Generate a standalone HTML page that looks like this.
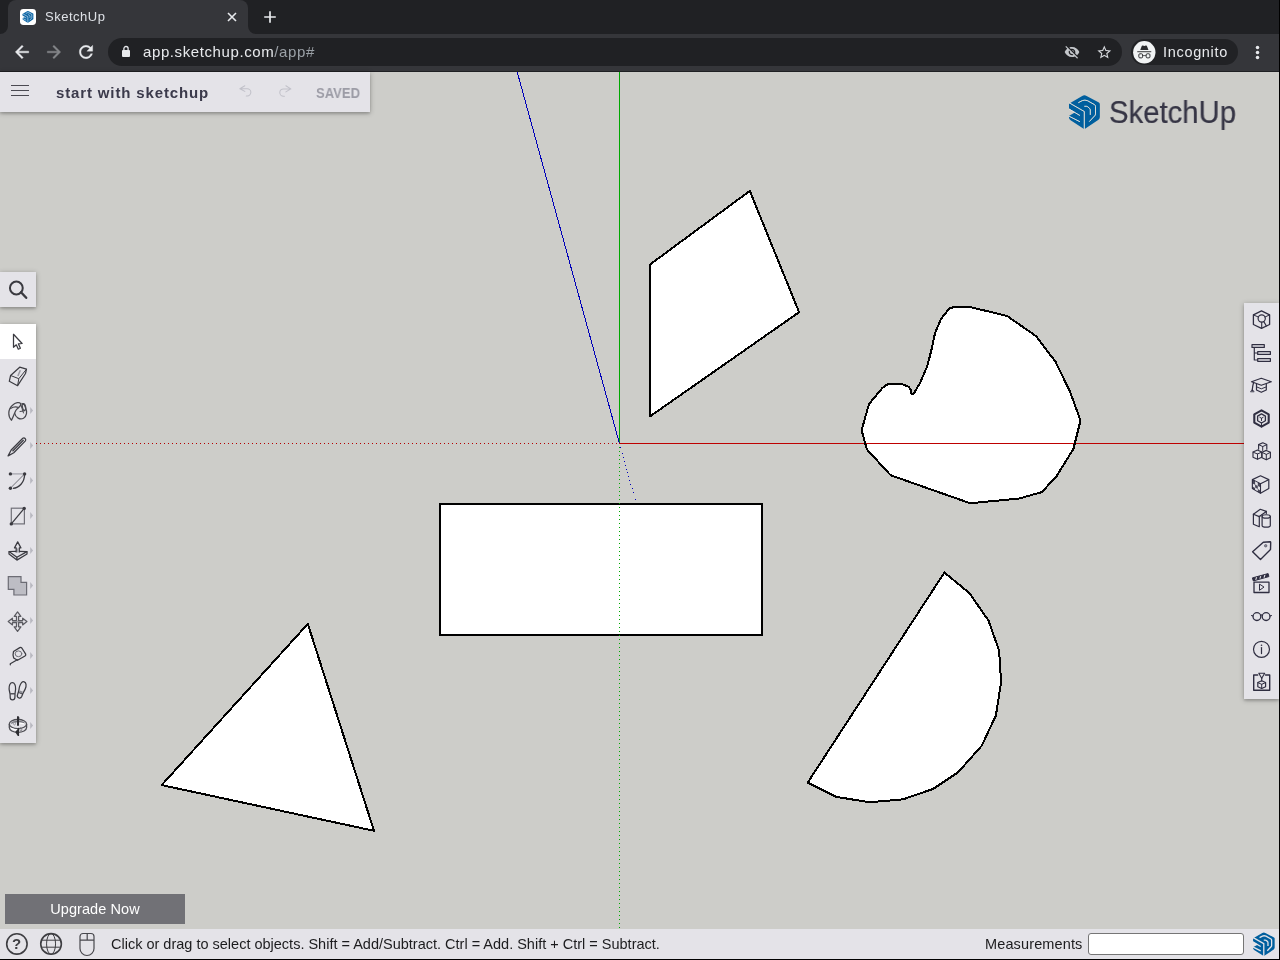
<!DOCTYPE html>
<html>
<head>
<meta charset="utf-8">
<title>SketchUp</title>
<style>
html,body{margin:0;padding:0;}
body{width:1280px;height:960px;overflow:hidden;position:relative;background:#cdcdc9;font-family:"Liberation Sans",sans-serif;}
.abs{position:absolute;}
#tabbar{left:0;top:0;width:1280px;height:34px;background:#202124;}
#tab{left:8px;top:0;width:240px;height:34px;background:#35363a;border-radius:8px 8px 0 0;}
#toolbar{left:0;top:34px;width:1280px;height:37px;background:#35363a;}
#tbline{left:0;top:71px;width:1280px;height:1px;background:#1f2023;}
#omni{left:108px;top:38px;width:1014px;height:28px;border-radius:14px;background:#202124;}
#hdr{left:0;top:72px;width:370px;height:40px;background:#e4e3e8;box-shadow:0 1px 5px rgba(0,0,0,.3),0 2px 2px rgba(0,0,0,.1);}
#ltool1{left:0;top:272px;width:36px;height:35px;background:#e4e3e8;box-shadow:0 1px 5px rgba(0,0,0,.3),0 2px 2px rgba(0,0,0,.1);}
#ltool2{left:0;top:324px;width:36px;height:419px;background:#e4e3e8;box-shadow:0 1px 5px rgba(0,0,0,.3),0 2px 2px rgba(0,0,0,.1);}
#rtool{left:1244px;top:303px;width:35px;height:396px;background:#e4e3e8;box-shadow:0 1px 5px rgba(0,0,0,.3),0 2px 2px rgba(0,0,0,.1);}
#status{left:0;top:929px;width:1280px;height:30px;background:#e4e3e8;}
#botline{left:0;top:959px;width:1280px;height:1px;background:#000;}
#upg{left:5px;top:894px;width:180px;height:30px;background:#717176;color:#fff;font-size:14.500px;letter-spacing:.07px;line-height:31px;text-align:center;will-change:transform;}

.ic{position:absolute;overflow:visible;}
.tx{position:absolute;white-space:nowrap;line-height:1;will-change:transform;}
#edgeR{left:1279px;top:0;width:1px;height:960px;background:#000;}

</style>
</head>
<body>
<svg width="0" height="0" style="position:absolute;left:0;top:0"><defs>
<mask id="sumask" maskUnits="userSpaceOnUse" x="0" y="0" width="46" height="46">
<rect width="46" height="46" fill="#fff"/>
<g fill="none" stroke="#000" stroke-width="0.85">
<path d="M7.200,12.800L22.300,21.500V40"/>
<path d="M6.500,18.700L17.900,25.500"/>
<path d="M6.500,25.900L17.900,31.700"/>
<path d="M16.300,12.700L20.300,10.600Q22.900,9.600 25.500,10.700L32.600,14.700Q33.500,15.300 33.500,16.400V23.900Q33.500,25 32.700,25.800L27.300,31.600"/>
<path d="M22.300,16.300H24.400Q25.200,16.300 25.900,16.900L27.600,18.400Q28.300,19.100 28.300,20V24.900"/>
</g>
<polygon points="6,18.200 13.200,22.300 6,26.400" fill="#000"/>
</mask>
<mask id="sumask2" maskUnits="userSpaceOnUse" x="0" y="0" width="46" height="46">
<rect width="46" height="46" fill="#fff"/>
<g fill="none" stroke="#000" stroke-width="1.85">
<path d="M7.200,12.800L22.300,21.500V40"/>
<path d="M6.500,18.700L17.900,25.500"/>
<path d="M6.500,25.900L17.900,31.700"/>
<path d="M16.300,12.700L20.300,10.600Q22.900,9.600 25.500,10.700L32.600,14.700Q33.500,15.300 33.500,16.400V23.900Q33.500,25 32.700,25.800L27.300,31.600"/>
<path d="M22.300,16.300H24.400Q25.200,16.300 25.900,16.900L27.600,18.400Q28.300,19.100 28.300,20V24.900"/>
</g>
<polygon points="6,17.800 14.200,22.600 6,27" fill="#000"/>
</mask>
<mask id="sumask3" maskUnits="userSpaceOnUse" x="0" y="0" width="46" height="46">
<rect width="46" height="46" fill="#fff"/>
<g fill="none" stroke="#000" stroke-width="1.5">
<path d="M7.200,12.800L22.300,21.500V40"/>
<path d="M6.500,18.700L17.900,25.500"/>
<path d="M6.500,25.900L17.900,31.700"/>
<path d="M16.300,12.700L20.300,10.600Q22.900,9.600 25.500,10.700L32.600,14.700Q33.500,15.300 33.500,16.400V23.900Q33.500,25 32.700,25.800L27.300,31.600"/>
<path d="M22.300,16.300H24.400Q25.200,16.300 25.900,16.900L27.600,18.400Q28.300,19.100 28.300,20V24.900"/>
</g>
<polygon points="6,18.200 13.200,22.300 6,26.400" fill="#000"/>
</mask>
<g id="sulogo"><path mask="url(#sumask)" fill="#005f9e" d="M20.200,6.100Q22.400,4.600 24.600,6.100L36.900,12.500Q37.850,13.100 37.850,14.200V27Q37.850,28.700 36.500,29.700L23.100,38.700Q22.400,39.300 21.600,38.700L8.600,30.300Q7,29.300 7,27.500V14.600Q7,13.700 7.800,13.200Z"/></g>
<g id="sulogo2"><path mask="url(#sumask2)" fill="#005f9e" d="M20.200,6.100Q22.400,4.600 24.600,6.100L36.900,12.500Q37.850,13.100 37.850,14.200V27Q37.850,28.700 36.500,29.700L23.100,38.700Q22.400,39.300 21.600,38.700L8.600,30.300Q7,29.300 7,27.500V14.600Q7,13.700 7.800,13.200Z"/></g>
<g id="sulogo3"><path mask="url(#sumask3)" fill="#0a64a4" d="M20.200,6.100Q22.400,4.600 24.600,6.100L36.900,12.500Q37.850,13.100 37.850,14.200V27Q37.850,28.700 36.500,29.700L23.100,38.700Q22.400,39.300 21.600,38.700L8.600,30.300Q7,29.300 7,27.500V14.600Q7,13.700 7.800,13.200Z"/></g>
</defs></svg>
<svg id="scene" class="abs" style="left:0;top:72px" width="1280" height="856" viewBox="0 72 1280 856">
<g shape-rendering="crispEdges" fill="none" stroke-width="1">
<line x1="0" y1="443.5" x2="619" y2="443.5" stroke="#b40000" stroke-dasharray="1 3"/>
<line x1="619" y1="443.5" x2="1280" y2="443.5" stroke="#be0000"/>
<line x1="619.5" y1="72" x2="619.5" y2="443" stroke="#00a800"/>
</g>
<line x1="517.230" y1="72" x2="619.460" y2="443.500" stroke="#0000b8" stroke-width="1" shape-rendering="crispEdges"/>
<path shape-rendering="crispEdges" fill="#0000b8" d="M620,447h1v1h-1zM622,453h1v1h-1zM623,457h1v1h-1zM624,461h1v1h-1zM625,465h1v1h-1zM626,469h1v1h-1zM627,472h1v1h-1zM628,476h1v1h-1zM629,480h1v1h-1zM630,484h1v1h-1zM632,488h1v1h-1zM633,492h1v1h-1zM635,499h1v1h-1z"/>
<g fill="#fff" stroke="#000" stroke-width="2" stroke-linejoin="round" shape-rendering="crispEdges">
<polygon points="749.8,190.9 799.1,312.2 650,416.4 650,264.5"/>
<rect x="440" y="504" width="322" height="131" shape-rendering="crispEdges"/>
<polygon points="307.8,623.9 374,830.8 161.7,785.1"/>
<polygon points="944.4,572.5 969.4,593.1 988.5,620.6 999.1,650.6 1001.1,682 995.9,715.5 981.8,745.6 958.1,772.3 933.2,788.9 903.1,799.3 869.6,802.3 836.1,796.8 807.7,782.6"/>
<polygon points="949.3,308.3 954.6,307 968.7,306.7 1007,315.9 1036.2,336.2 1055.6,361.9 1070,391.6 1080.1,419.3 1080.1,422.3 1073.5,448.7 1056.8,475.8 1041.9,492.1 1018.9,498.6 976.9,502.6 968.6,502.7 890.6,475.2 866.9,449.4 862.2,432.5 861.9,429.1 869,404 882.5,387.8 888,384 901.8,384 908.8,386.8 911.2,390.5 911.2,393.6 913.4,394.3 920.4,382.3 927.5,365.4 931.6,349.2 935.1,332.9 941,319.1"/>
</g>
<g shape-rendering="crispEdges" fill="none" stroke-width="1">
<line x1="619.5" y1="447" x2="619.5" y2="928" stroke="#00a800" stroke-dasharray="1 3"/>
<line x1="862" y1="443.5" x2="1079" y2="443.5" stroke="#be0000"/>
</g>
<polygon points="949.3,308.3 954.6,307 968.7,306.7 1007,315.9 1036.2,336.2 1055.6,361.9 1070,391.6 1080.1,419.3 1080.1,422.3 1073.5,448.7 1056.8,475.8 1041.9,492.1 1018.9,498.6 976.9,502.6 968.6,502.7 890.6,475.2 866.9,449.4 862.2,432.5 861.9,429.1 869,404 882.5,387.8 888,384 901.8,384 908.8,386.8 911.2,390.5 911.2,393.6 913.4,394.3 920.4,382.3 927.5,365.4 931.6,349.2 935.1,332.9 941,319.1" fill="none" stroke="#000" stroke-width="2" stroke-linejoin="round" shape-rendering="crispEdges"/>
</svg>
<div id="tabbar" class="abs"></div>
<div id="tab" class="abs"></div>
<div id="toolbar" class="abs"></div>
<div id="tbline" class="abs"></div>
<div id="omni" class="abs"></div>

<!-- tab curves -->
<svg class="ic" style="left:0;top:26px" width="8" height="8" viewBox="0 0 8 8"><path d="M8 0V8H0A8 8 0 0 0 8 0Z" fill="#35363a"/></svg>
<svg class="ic" style="left:248px;top:26px" width="8" height="8" viewBox="0 0 8 8"><path d="M0 0V8H8A8 8 0 0 1 0 0Z" fill="#35363a"/></svg>
<!-- favicon -->
<svg class="ic" style="left:20px;top:9px" width="16" height="16" viewBox="0 0 16 16">
<rect x="0" y="0" width="16" height="16" rx="3.4" fill="#fff"/>
<g transform="translate(7.9,7.9) scale(0.355) translate(-22.4,-22.1)"><use href="#sulogo3"/></g>
</svg>
<div class="tx" style="left:44.5px;top:10px;font-size:13px;letter-spacing:.5px;color:#dee1e6">SketchUp</div>
<svg class="ic" style="left:227px;top:12px" width="10" height="10" viewBox="0 0 10 10"><path d="M1 1L9 9M9 1L1 9" stroke="#e8eaed" stroke-width="1.6" fill="none"/></svg>
<svg class="ic" style="left:263px;top:10px" width="14" height="14" viewBox="0 0 14 14"><path d="M7 1.2V12.8M1.2 7H12.8" stroke="#e8eaed" stroke-width="1.7" fill="none"/></svg>
<!-- nav icons -->
<svg class="ic" style="left:12px;top:42px" width="20" height="20" viewBox="0 0 24 24"><path d="M20 11H7.83l5.59-5.59L12 4l-8 8 8 8 1.41-1.41L7.83 13H20v-2z" fill="#e8eaed" stroke="#e8eaed" stroke-width=".5"/></svg>
<svg class="ic" style="left:44px;top:42px" width="20" height="20" viewBox="0 0 24 24"><path d="M4 11h12.17l-5.59-5.59L12 4l8 8-8 8-1.41-1.41L16.17 13H4v-2z" fill="#85878a" stroke="#85878a" stroke-width=".5"/></svg>
<svg class="ic" style="left:76px;top:42px" width="20" height="20" viewBox="0 0 24 24"><path d="M17.65 6.35C16.2 4.9 14.21 4 12 4c-4.42 0-7.99 3.58-7.99 8s3.57 8 7.99 8c3.73 0 6.84-2.55 7.73-6h-2.08c-.82 2.33-3.04 4-5.65 4-3.31 0-6-2.69-6-6s2.690-6 6-6c1.660 0 3.140.69 4.220 1.780L13 11h7V4l-2.350 2.350z" fill="#e8eaed" stroke="#e8eaed" stroke-width=".4"/></svg>
<!-- lock -->
<svg class="ic" style="left:121px;top:45px" width="10" height="13" viewBox="0 0 10 13"><rect x="1" y="5" width="8" height="7" rx="1" fill="#e8eaed"/><path d="M2.9 5.5V3.6a2.1 2.1 0 0 1 4.200 0V5.500" stroke="#e8eaed" stroke-width="1.3" fill="none"/></svg>
<div class="tx" style="left:142.500px;top:44.300px;font-size:15px;letter-spacing:.6px;color:#e8eaed">app.sketchup.com<span style="color:#9aa0a6">/app#</span></div>
<!-- eye off -->
<svg class="ic" style="left:1064px;top:44px" width="16" height="16" viewBox="0 0 24 24"><path d="M12 7c2.760 0 5 2.240 5 5 0 .65-.13 1.260-.36 1.830l2.920 2.920c1.510-1.260 2.700-2.890 3.430-4.750-1.730-4.390-6-7.500-11-7.500-1.400 0-2.740.25-3.980.7l2.160 2.160C10.740 7.130 11.350 7 12 7zM2 4.270l2.280 2.280.46.46C3.080 8.300 1.780 10.020 1 12c1.730 4.390 6 7.500 11 7.500 1.550 0 3.030-.3 4.380-.84l.42.42L19.730 22 21 20.730 3.270 3 2 4.270zM7.530 9.800l1.550 1.550c-.05.21-.08.43-.08.65 0 1.660 1.340 3 3 3 .22 0 .44-.03.65-.08l1.550 1.550c-.67.33-1.410.53-2.200.53-2.760 0-5-2.240-5-5 0-.79.2-1.530.53-2.200zm4.310-.78l3.150 3.150.02-.16c0-1.660-1.340-3-3-3l-.17.010z" fill="#c4c7cb"/></svg>
<!-- star -->
<svg class="ic" style="left:1095.700px;top:43.700px" width="16.600" height="16.600" viewBox="0 0 24 24"><path d="M22 9.240l-7.190-.62L12 2 9.190 8.630 2 9.240l5.460 4.730L5.820 21 12 17.270 18.180 21l-1.630-7.030L22 9.240zM12 15.400l-3.760 2.270 1-4.280-3.320-2.880 4.380-.38L12 6.100l1.710 4.040 4.380.38-3.320 2.880 1 4.280L12 15.400z" fill="#d5d8dc"/></svg>
<!-- incognito chip -->
<div class="abs" style="left:1131px;top:39px;width:107px;height:26px;border-radius:13px;background:#212225"></div>
<svg class="ic" style="left:1132.700px;top:40.600px" width="22.600" height="22.600" viewBox="0 0 24 24">
<circle cx="12" cy="12" r="11.900" fill="#f1f3f4"/>
<path d="M7.700,9.600L9.300,5.400Q9.600,4.500 10.500,4.800L11.300,5.100Q12,5.400 12.800,5.100L13.600,4.800Q14.500,4.500 14.800,5.400L16.400,9.600Z" fill="#2b2c2f"/>
<rect x="4.500" y="10.900" width="14.900" height="1" fill="#2b2c2f"/>
<rect x="6.200" y="13.600" width="4" height="4.300" rx="1.100" fill="none" stroke="#2b2c2f" stroke-width="1.050"/>
<rect x="14" y="13.600" width="4" height="4.300" rx="1.100" fill="none" stroke="#2b2c2f" stroke-width="1.050"/>
<path d="M10.400,15.500H13.800" fill="none" stroke="#2b2c2f" stroke-width=".8"/>
</svg>
<div class="tx" style="left:1163.200px;top:44.500px;font-size:14.500px;letter-spacing:.68px;color:#e8eaed">Incognito</div>
<svg class="ic" style="left:1254px;top:44px" width="8" height="16" viewBox="0 0 8 16"><circle cx="3.500" cy="3.500" r="1.750" fill="#e8eaed"/><circle cx="3.500" cy="8.500" r="1.750" fill="#e8eaed"/><circle cx="3.500" cy="13.500" r="1.750" fill="#e8eaed"/></svg>

<!-- main logo -->
<svg class="ic" style="left:1062px;top:90px" width="46" height="46" viewBox="0 0 46 46"><use href="#sulogo"/><g fill="none" stroke="#fff8ec" stroke-opacity=".6" stroke-width=".9"><path d="M7.200,12.800L22.300,21.500V39"/><path d="M7,19L17.900,25.500"/><path d="M7.200,26.300L17.900,31.700"/><path d="M16.300,12.700L20.300,10.600Q22.900,9.600 25.500,10.700L32.600,14.700Q33.500,15.300 33.500,16.400V23.900Q33.500,25 32.700,25.800L27.300,31.600"/><path d="M22.300,16.300H24.400Q25.200,16.300 25.900,16.900L27.600,18.400Q28.300,19.100 28.300,20V24.900"/></g></svg>
<div class="tx" style="left:1108.700px;top:97.200px;font-size:31px;color:#363545;transform:scaleX(.945);transform-origin:0 0;-webkit-text-stroke:.2px #363545">SketchUp</div>
<div id="hdr" class="abs">
<div class="abs" style="left:11px;top:13px;width:18px;height:1px;background:#4a4a52"></div>
<div class="abs" style="left:11px;top:18px;width:18px;height:1px;background:#4a4a52"></div>
<div class="abs" style="left:11px;top:23px;width:18px;height:1px;background:#4a4a52"></div>
<div class="tx" style="left:56.200px;top:13px;font-size:15px;font-weight:bold;letter-spacing:.86px;color:#3b3a4b">start with sketchup</div>
<svg class="ic" style="left:230px;top:0px" width="70" height="40" viewBox="230 0 70 40"><g fill="none" stroke="#c1c1c9" stroke-width="1.050" stroke-linecap="round" stroke-linejoin="round"><path d="M244.800,13.700L239.900,16.700L244.800,19.400M239.900,16.700H247.200A3.650,3.650 0 0 1 247.200,24H246.300"/><path d="M285.900,13.800L290.800,16.900L285.900,19.900M290.800,16.900H283.500A3.700,3.700 0 0 0 283.500,24.300H284.400"/></g></svg>
<div class="tx" style="left:315.500px;top:13.600px;font-size:14.500px;font-weight:bold;transform:scaleX(.9);transform-origin:0 0;color:#9c9ca6">SAVED</div>
</div>
<div id="ltool1" class="abs"></div>
<div id="ltool2" class="abs"><div class="abs" style="left:0;top:0;width:36px;height:35px;background:#fff"></div></div>
<svg class="ic" style="left:0;top:266px" width="40" height="490" viewBox="0 266 40 490">
<!-- search -->
<circle cx="16.350" cy="288" r="6.400" fill="none" stroke="#3a3a40" stroke-width="2"/>
<path d="M21,292.300L26.200,297.800" stroke="#3a3a40" stroke-width="2.400" stroke-linecap="round"/>
<!-- select cursor -->
<path d="M13.500,334.300V347.300L16.300,344.800L18.300,349.200L20.400,348.200L18.400,343.900L22.100,343.500Z" fill="#fff" stroke="#3a3a40" stroke-width="1.250" stroke-linejoin="round"/>
<!-- eraser -->
<g fill="none" stroke="#3a3a40" stroke-width="1.200" stroke-linejoin="round">
<path d="M19.700,367.200L26.500,369.200L25.500,373.500L17.600,385.700L9.300,381.300L10.600,375.500Z"/>
<path d="M10.600,375.500L18.800,378.700L26.500,369.200M18.800,378.700L17.600,385.700" stroke-width="1"/>
<path d="M20.300,370.300L17.900,376" stroke="#9a9aa2" stroke-width="1.500"/>
</g>
<!-- paint bucket -->
<g fill="none" stroke="#48484e" stroke-width="1.250" stroke-linejoin="round" stroke-linecap="round">
<path d="M11.500,420.300C8,417 7.500,409.500 12.500,405.300C15.500,402.500 19.500,401.800 20.500,403.500C22,406 17.500,408 15.800,410.500C14.500,413 13.500,416.500 11.500,420.300Z"/>
<path d="M10.500,408.500C13,407 16,406.500 18.500,407.500"/>
<path d="M14.800,413.500C15.500,417.500 20,420.200 23.500,418.200C27,416 27.200,411.500 25.800,408.500C25,405.500 23.500,403.800 22,403.500"/>
<ellipse cx="24" cy="407" rx="1.600" ry="3.400" transform="rotate(-12 24 407)"/>
<path d="M20.500,403.500C21.500,407 22.500,410 23.500,413M20,411.500L24.500,410.800" stroke-width="1"/>
</g>
<path d="M30.200,407.1L33.100,410.5L30.200,413.9Z" fill="#b9b9c1"/>
<!-- pencil -->
<g fill="none" stroke="#3a3a40" stroke-width="1.250" stroke-linejoin="round">
<path d="M8.100,455.900L11.200,450L22.800,438.300Q24,437.300 25.100,438.500Q26.300,439.800 25.400,440.900L13.800,452.700Z"/>
<path d="M12.500,451.300L23.600,440"/>
</g>
<path d="M30.200,442.1L33.100,445.5L30.200,448.9Z" fill="#b9b9c1"/>
<!-- arc -->
<path d="M10.400,473.900H24.600" stroke="#a3a3ab" stroke-width="1.250"/>
<path d="M24.600,473.900L10.400,488.200" stroke="#707078" stroke-width="1"/>
<path d="M24.600,474.500C24.500,482.500 19,487.800 13,488.300" fill="none" stroke="#3a3a40" stroke-width="1.300"/>
<circle cx="10.400" cy="473.900" r="1.700" fill="#3a3a40"/><circle cx="24.600" cy="473.900" r="1.700" fill="#3a3a40"/><circle cx="10.400" cy="488.200" r="1.700" fill="#3a3a40"/>
<path d="M30.200,477.1L33.100,480.5L30.200,483.9Z" fill="#b9b9c1"/>
<!-- rectangle -->
<rect x="11.300" y="508.200" width="13.100" height="15.700" fill="none" stroke="#707078" stroke-width="1.200"/>
<path d="M24.200,508.400L11.300,523.900" stroke="#3a3a40" stroke-width="1.250"/>
<circle cx="24.200" cy="508.400" r="1.700" fill="#3a3a40"/><circle cx="11.300" cy="523.900" r="1.700" fill="#3a3a40"/>
<path d="M30.200,512.1L33.100,515.5L30.200,518.9Z" fill="#b9b9c1"/>
<!-- push/pull -->
<g fill="none" stroke="#3a3a40" stroke-width="1.250" stroke-linejoin="round">
<path d="M16.200,551.300L9,551.500L16.900,557.300L27,551.600L19.300,551.300"/>
<path d="M9,551.500V554L16.900,560.100L27,554V551.600M16.900,557.300V560.100"/>
<path d="M16.200,552.500V547.900H14.500L17.700,541.900L20.900,547.900H19.300V552.500" fill="#e4e3e8"/>
<path d="M17.700,548.500V552.500" stroke="#a3a3ab" stroke-width="1.400"/>
</g>
<path d="M30.200,547.1L33.100,550.5L30.200,553.9Z" fill="#b9b9c1"/>
<!-- solid tools -->
<path d="M8.300,576.600H21V582.300H26.600V595H13.900V589.400H8.300Z" fill="#bdbdc4" stroke="#6c6c74" stroke-width="1.200"/>
<path d="M30.200,582.1L33.100,585.5L30.200,588.9Z" fill="#b9b9c1"/>
<!-- move -->
<g fill="none" stroke="#5b5b61" stroke-width="1.250" stroke-linejoin="round">
<rect x="12.500" y="620.800" width="10.200" height="1.700" fill="#a4a4aa" stroke="none"/>
<path d="M17.560,611.900L20.900,616.300H18.600V620.700H22.660V618.200L26.900,621.600L22.660,624.900V622.500H18.600V626.800H20.900L17.560,631.400L14.200,626.800H16.500V622.500H12.450V624.900L8.200,621.600L12.450,618.200V620.700H16.500V616.300H14.200Z"/>
</g>
<path d="M30.200,617.1L33.100,620.5L30.200,623.9Z" fill="#b9b9c1"/>
<!-- tape measure -->
<g fill="none" stroke="#3a3a40" stroke-width="1.250" stroke-linejoin="round" stroke-linecap="round">
<path d="M13.500,651.500L19.800,647.600Q21,647.200 21.800,648L25.700,654.200Q26,655.300 25,656L17.500,660.300L13.700,658Q12.500,655 13.500,651.500Z"/>
<ellipse cx="18.500" cy="653.800" rx="3.300" ry="2.900" stroke="#707078" stroke-width="1"/>
<path d="M17.300,659.700L10.300,663.800V664.800"/>
</g>
<path d="M30.200,652.1L33.100,655.5L30.200,658.9Z" fill="#b9b9c1"/>
<!-- walk / footprints -->
<g fill="none" stroke="#3a3a40" stroke-width="1.250" stroke-linejoin="round">
<path d="M12.300,682.700C14.500,682.700 15.800,685.500 15.600,689C15.500,691 15,692.500 15,694.500L14.900,697.500C14.800,699.300 13.600,699.800 12.500,699.800C11.300,699.800 10.200,699.200 10.200,697.500L10.100,694.500C10,692.500 9.200,691 9.100,689C8.900,685.500 10.200,682.700 12.300,682.700Z"/>
<path d="M10.300,693.800H14.900"/>
<path d="M24.200,681.800C26.300,682.500 26.600,685.600 25.300,688.800C24.600,690.700 23.500,692 22.800,693.800L21.700,696.500C21,698.100 19.700,698.200 18.700,697.800C17.600,697.300 16.900,696.300 17.500,694.700L18.500,691.800C19.100,690 19,688.300 19.600,686.400C20.700,683.100 22.200,681.100 24.200,681.800Z"/>
<path d="M18.400,692.200L22.600,694"/>
</g>
<path d="M19.800,690.400L23,691.800L21.800,693.500L18.800,692.200Z" fill="#8a8a92"/>
<path d="M30.200,687.1L33.100,690.5L30.200,693.9Z" fill="#b9b9c1"/>
<!-- orbit -->
<g fill="none" stroke="#4c4c52" stroke-width="1.300">
<path d="M9.300,724C9.300,721.400 13.200,719.500 17.900,719.500C22.600,719.500 26.600,721.400 26.600,724V727.600C26.600,730.300 22.700,732.300 17.900,732.300C13.100,732.300 9.300,730.300 9.300,727.600Z"/>
<path d="M9.300,724C9.300,726.600 13.200,728.600 17.900,728.600C22.600,728.600 26.600,726.600 26.600,724"/>
<path d="M11.700,723.700C11.700,722.300 14.500,721.500 17.900,721.500C21.300,721.500 24.200,722.300 24.200,723.700" stroke="#77777e"/>
<path d="M10.800,727.700L16.500,729.700V728.700L18.800,730.500L16.500,731.900V730.900L11,729" fill="#fff" stroke="none"/>
<path d="M19.500,722.400L24.600,723.300L24.400,724.400L19.500,723.600Z" fill="#fff" stroke="none"/>
<ellipse cx="14.500" cy="723.300" rx="1" ry="1.700" stroke="#8a8a90" stroke-width=".8"/>
<ellipse cx="20.800" cy="729.300" rx="1" ry="1.700" stroke="#6a6a70" stroke-width=".8"/>
</g>
<path d="M17,716.200H18.700L19.700,718.600H19V725.800H17Z" fill="#2e2e33"/>
<path d="M15.200,732L19,727.500V731.500L19.100,735.900H17.800Z" fill="#2e2e33"/>
<path d="M30.200,722.1L33.100,725.5L30.200,728.9Z" fill="#b9b9c1"/>
</svg>
<div id="rtool" class="abs"></div>
<svg class="ic" style="left:1240px;top:300px" width="40" height="404" viewBox="1240 300 40 404">
<g fill="none" stroke="#2f2e41" stroke-width="1.300" stroke-linejoin="round" stroke-linecap="round">
<!-- 0 entity info: cube + magnifier -->
<path d="M1261.500,310.800L1269.600,314.800V324.500L1261.500,328.300L1253.400,324.500V314.800Z"/>
<path d="M1253.600,315L1258.300,317M1269.400,315L1265,317" stroke-width="1"/>
<circle cx="1261.700" cy="318.500" r="3.600" stroke-width="1.200"/>
<path d="M1261.700,322.200V327.600M1263.800,321.600L1266.300,325.900" stroke-width="1.100"/>
<!-- 1 outliner -->
<rect x="1252" y="344.700" width="12.300" height="2.700" stroke-width="1.200"/>
<rect x="1257.700" y="351.700" width="12.700" height="2.700" stroke-width="1.200"/>
<rect x="1257.700" y="358.600" width="12.700" height="2.700" stroke-width="1.200"/>
<path d="M1254.300,347.600V360H1257.500M1254.300,353H1257.500" stroke-width="1.200"/>
<!-- 2 instructor: grad cap -->
<path d="M1251.500,381.700L1261.300,378.300L1271.300,381.700L1261.300,385.300Z" stroke-width="1.200"/>
<path d="M1256.500,384V390L1261.300,392.300L1266.300,390V384" stroke-width="1.200"/>
<path d="M1257,387L1261.300,388.800L1266,387" stroke-width="1"/>
<path d="M1253.600,382.500Q1252.600,386 1252.300,389.500" stroke-width="1.200"/><path d="M1250.600,391.600L1252.300,389.300L1254,391.600Z" fill="#2f2e41" stroke-width=".6"/>
<!-- 3 components: hexagon thick -->
<path d="M1261.500,410.300L1268.700,414.300V422.600L1261.500,426.700L1254.300,422.600V414.300Z" stroke-width="2.100"/>
<path d="M1261.500,413.900L1265.400,416.100V420.700L1261.500,423L1257.600,420.700V416.100Z" stroke-width="1.300"/>
<path d="M1261.500,423V427M1259.800,417.300L1261.500,418.300L1263.200,417.300M1261.500,418.300V420.500" stroke-width="1"/>
<!-- 4 3D warehouse: three cubes -->
<g stroke-width="1.150">
<path d="M1262.800,442.800L1266.800,444.600V449.200M1258.600,449.200V444.600L1262.800,442.800"/>
<path d="M1258.800,444.800L1262.700,446.500L1266.600,444.800M1262.700,446.500V450.500" stroke-width="1"/>
<path d="M1257.500,450L1261.700,452V457.300L1257.500,459.300L1253,457.300V452Z"/>
<path d="M1253.200,452.200L1257.500,454L1261.500,452.200M1257.500,454V459" stroke-width="1"/>
<path d="M1266.300,450.400L1270.400,452.300V457.700L1266.300,459.800L1262,457.700V452.300Z"/>
<path d="M1262.200,452.500L1266.300,454.400L1270.200,452.500M1266.300,454.400V459.500" stroke-width="1"/>
</g>
<!-- 5 materials: cube w/ checker -->
<path d="M1260.500,475.800L1268.800,479.600V488.600L1260.500,493.300L1252.400,488.600V479.600Z" stroke-width="1.200"/>
<path d="M1252.600,479.800L1260.500,483.700L1268.600,479.800M1260.500,483.700V493" stroke-width="1.100"/>
<!-- 6 styles: box + cylinder -->
<path d="M1260.300,509.300L1266.300,511.400L1259.300,516.600L1253.400,514.200Z" stroke-width="1.200"/>
<path d="M1253.400,514.200V524.200L1259.300,526.700V516.600M1266.300,511.400V513.500" stroke-width="1.200"/>
<path d="M1259.300,516.600L1261,515.400" stroke-width="1"/>
<ellipse cx="1266.200" cy="516.400" rx="4.100" ry="1.700" stroke-width="1.150"/>
<path d="M1262.100,516.400V525.400C1262.100,526.400 1263.900,527.100 1266.200,527.100C1268.500,527.100 1270.300,526.400 1270.300,525.400V516.400" stroke-width="1.200"/>
<!-- 7 tags -->
<path d="M1252.600,551.700L1263.300,542.300L1270.300,541.800Q1270.700,541.900 1270.700,542.500L1270.500,549.500L1260.500,559.500Z" stroke-width="1.400"/>
<!-- 8 scenes: clapper -->
<rect x="1254" y="582.200" width="15" height="10.300" stroke-width="1.300"/>
<path d="M1259.500,584.500V590.300L1263.700,587.300Z" stroke-width="1"/>
<!-- 9 display: glasses -->
<circle cx="1256.900" cy="616.600" r="3.900" stroke-width="1.300"/>
<circle cx="1266.100" cy="616.600" r="3.900" stroke-width="1.300"/>
<path d="M1260.500,615.300Q1261.500,614.500 1262.500,615.300M1253,616L1251.600,615.500M1270,616L1271.400,615.500" stroke-width="1.200"/>
<!-- 10 model info -->
<circle cx="1261.500" cy="649.300" r="8" stroke-width="1.200"/>
<path d="M1261.500,647.500V653.600" stroke-width="1.200"/>
<!-- 11 save to: box w/ cube -->
<path d="M1257.700,675H1253.700V690.300H1269.700V675H1265.500" stroke-width="1.400"/>
<path d="M1258.800,673.200H1264.700L1261.700,678.200Z" stroke-width="1.100"/>
<path d="M1261.700,678.300V681" stroke-width="1.100"/>
<path d="M1261.700,680.700L1265.600,682.500V686.700L1261.700,688.500L1257.800,686.700V682.500Z" stroke-width="1.200"/>
<path d="M1258,682.700L1261.700,684.300L1265.400,682.700M1261.700,684.300V688.300" stroke-width="1"/>
</g>
<circle cx="1261.500" cy="645.300" r=".8" fill="#2f2e41"/>
<circle cx="1265.700" cy="545.800" r="1.250" fill="#8d8c99" stroke="#2f2e41" stroke-width=".5"/>
<!-- materials checker fill -->
<path d="M1252.400,479.600L1260.500,483.700V493.300L1252.400,488.600Z" fill="#2f2e41" opacity=".85"/>
<path d="M1255.100,481.300L1257.800,482.700V485.900L1255.100,484.400ZM1252.900,483.700L1255.100,484.800V488L1252.900,486.800ZM1257.800,485.900L1260,487.100V490.300L1257.800,489.100ZM1255.100,487.600L1257.800,489.100V491.300L1255.100,489.800Z" fill="#e4e3e8"/>
<!-- clapper top -->
<g><polygon points="1252.40,577.90 1268.10,573.60 1268.90,576.60 1253.30,580.90" fill="#2f2e41" stroke="#2f2e41" stroke-width="1" stroke-linejoin="round"/><polygon points="1255.98,577.31 1257.19,576.98 1256.42,579.66 1255.22,579.99" fill="#e4e3e8"/><polygon points="1260.13,576.17 1261.33,575.84 1260.57,578.52 1259.36,578.85" fill="#e4e3e8"/><polygon points="1264.27,575.04 1265.48,574.71 1264.72,577.38 1263.51,577.71" fill="#e4e3e8"/></g>
</svg>
<div id="upg" class="abs">Upgrade Now</div>
<div id="status" class="abs">
<svg class="ic" style="left:5px;top:3px" width="24" height="24" viewBox="0 0 24 24"><circle cx="11.900" cy="11.950" r="10.200" fill="none" stroke="#3e3e42" stroke-width="1.600"/></svg>
<div class="tx" style="left:12.300px;top:7.400px;font-size:15px;font-weight:bold;color:#3e3e42">?</div>
<svg class="ic" style="left:39px;top:3px" width="24" height="24" viewBox="0 0 24 24"><g fill="none" stroke="#3e3e42"><circle cx="12.050" cy="11.900" r="10.300" stroke-width="1.600"/><ellipse cx="12.050" cy="11.900" rx="4.500" ry="10.300" stroke-width="1"/><path d="M2.500 8.200H21.600M2.500 15.200H21.600" stroke-width="1"/></g></svg>
<svg class="ic" style="left:78px;top:3px" width="18" height="26" viewBox="0 0 18 26"><g fill="none" stroke="#48484d" stroke-width="1.200"><path d="M2 4.500A3 3 0 0 1 5 1.500H13A3 3 0 0 1 16 4.500V16.500A7 7 0 0 1 2 16.500Z"/><path d="M2 8.200H16M9.200 1.500V8.200"/></g></svg>
<div class="tx" style="left:111px;top:8.100px;font-size:14.500px;color:#1c1c1e">Click or drag to select objects. Shift = Add/Subtract. Ctrl = Add. Shift + Ctrl = Subtract.</div>
<div class="tx" style="left:985px;top:8.200px;font-size:14.500px;letter-spacing:.13px;color:#1c1c1e">Measurements</div>
<div class="abs" style="left:1088px;top:4px;width:154px;height:20px;border:1px solid #767676;border-radius:3px;background:#fff"></div>
<svg class="ic" style="left:1248px;top:-1px" width="32" height="32" viewBox="0 0 32 32"><g transform="translate(15.850,16.150) scale(0.700) translate(-22.400,-22.100)"><use href="#sulogo2"/></g></svg>
</div>
<div id="botline" class="abs"></div>
<div id="edgeR" class="abs"></div>
</body>
</html>
